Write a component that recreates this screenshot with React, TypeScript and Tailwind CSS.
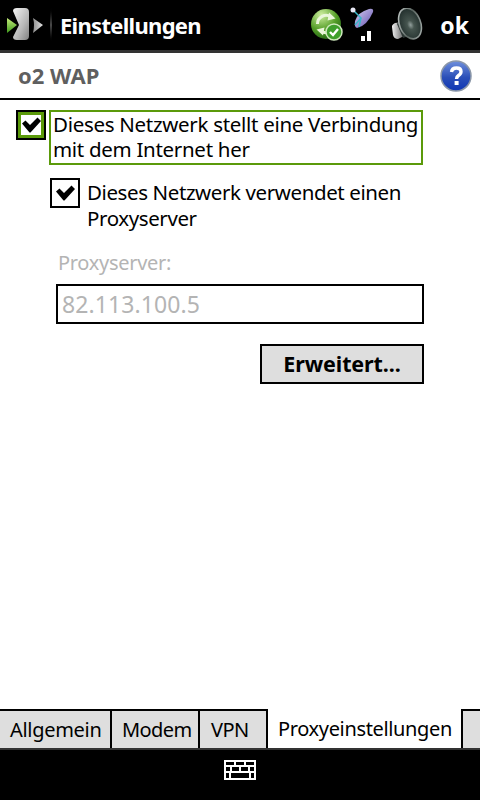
import React from 'react';

const Check = () => (
  <svg width="19" height="16" viewBox="0 0 19 16">
    <path d="M0 6.5 L3.5 3.5 L8 8 L15.5 0.5 L19 4 L8.5 15.5 L7.5 15.5 Z" fill="#000" />
  </svg>
);

const StartLogo = () => (
  <svg width="38" height="34" viewBox="0 0 38 34">
    <defs>
      <linearGradient id="tile" x1="0" y1="0" x2="1" y2="1">
        <stop offset="0" stopColor="#f4f4f4" />
        <stop offset="0.6" stopColor="#b8b8b8" />
        <stop offset="1" stopColor="#808080" />
      </linearGradient>
      <linearGradient id="arrow" x1="0" y1="0" x2="0" y2="1">
        <stop offset="0" stopColor="#c4ea7a" />
        <stop offset="1" stopColor="#3f9a1c" />
      </linearGradient>
      <linearGradient id="arrowGray" x1="0" y1="0" x2="1" y2="0">
        <stop offset="0" stopColor="#8f8f8f" />
        <stop offset="1" stopColor="#e4e4e4" />
      </linearGradient>
    </defs>
    <path d="M6 3 Q6 0 10 0 L18 0 Q22 0 22 4 L22 28 Q22 32 18 32 L10 32 Q6 32 6 29 L12 17 Z" fill="url(#tile)" />
    <path d="M0 10 L10 17 L0 25 Z" fill="url(#arrow)" />
    <path d="M26 10 L36 17 L26 25 Q28 17 26 10 Z" fill="url(#arrowGray)" />
  </svg>
);

const SyncIcon = () => (
  <svg width="32" height="32" viewBox="0 0 32 32">
    <defs>
      <radialGradient id="syncBg" cx="0.35" cy="0.2" r="0.9">
        <stop offset="0" stopColor="#cfeea0" />
        <stop offset="0.55" stopColor="#559f28" />
        <stop offset="1" stopColor="#1d5e10" />
      </radialGradient>
    </defs>
    <circle cx="15" cy="15" r="15" fill="url(#syncBg)" />
    <path d="M6.5 15 A8.5 8.5 0 0 1 20 8" fill="none" stroke="#eaf6da" strokeWidth="3" />
    <path d="M18 3.5 L24.5 9.5 L16.5 11.5 Z" fill="#eaf6da" />
    <path d="M23.5 15 A8.5 8.5 0 0 1 10 22" fill="none" stroke="#eaf6da" strokeWidth="3" />
    <path d="M12 26.5 L5.5 20.5 L13.5 18.5 Z" fill="#eaf6da" />
    <circle cx="23" cy="23" r="8" fill="#3f9f2c" stroke="#cfe9bd" strokeWidth="1.5" />
    <path d="M19 23 L22 26 L27 20" fill="none" stroke="#fff" strokeWidth="2.4" />
  </svg>
);

const SignalIcon = () => (
  <svg width="24" height="36" viewBox="0 0 24 36">
    <defs>
      <linearGradient id="dish" x1="0" y1="0" x2="1" y2="1">
        <stop offset="0" stopColor="#d8d0f2" />
        <stop offset="1" stopColor="#5f4fae" />
      </linearGradient>
    </defs>
    <path d="M7 21 Q17 19 23 5 Q24 1 19 2 Q8 5 5 14 Q4 20 7 21 Z" fill="url(#dish)" />
    <path d="M3 3 L11 11 L5 18 M11 11 L9 20" fill="none" stroke="#3cb7c9" strokeWidth="1.5" />
    <circle cx="3" cy="3" r="2.5" fill="#e8e8f4" />
    <rect x="11" y="29" width="4" height="5" fill="#fff" />
    <rect x="17" y="24" width="4" height="10" fill="#fff" />
  </svg>
);

const SpeakerIcon = () => (
  <svg width="32" height="34" viewBox="0 0 32 34">
    <defs>
      <linearGradient id="rim" x1="0" y1="0" x2="1" y2="1">
        <stop offset="0" stopColor="#d4dad9" />
        <stop offset="0.5" stopColor="#59645f" />
        <stop offset="1" stopColor="#b4bcba" />
      </linearGradient>
      <radialGradient id="cone" cx="0.5" cy="0.55" r="0.6">
        <stop offset="0" stopColor="#93a09d" />
        <stop offset="0.25" stopColor="#46554f" />
        <stop offset="1" stopColor="#1d2a28" />
      </radialGradient>
      <linearGradient id="magnet" x1="0" y1="0" x2="1" y2="0">
        <stop offset="0" stopColor="#f0f0f0" />
        <stop offset="0.6" stopColor="#8c8c8c" />
        <stop offset="1" stopColor="#4a4a4a" />
      </linearGradient>
    </defs>
    <path d="M1 19 Q0.5 17 4 15 L12 14 L15 27 L7 31 Q3 31 2 27 Z" fill="url(#magnet)" />
    <path d="M6 16 L14 2 L24 26 L12 30 Z" fill="#2c3735" />
    <ellipse cx="19" cy="15.5" rx="10.5" ry="16" transform="rotate(-22 19 15.5)" fill="url(#cone)" stroke="url(#rim)" strokeWidth="1.6" />
  </svg>
);

const HelpIcon = () => (
  <svg width="32" height="32" viewBox="0 0 32 32">
    <defs>
      <linearGradient id="helpBg" x1="0" y1="0" x2="0" y2="1">
        <stop offset="0" stopColor="#6f8fdc" />
        <stop offset="0.55" stopColor="#2a4fb8" />
        <stop offset="1" stopColor="#0f36b4" />
      </linearGradient>
    </defs>
    <circle cx="16" cy="16" r="15" fill="url(#helpBg)" stroke="#8b97a8" strokeWidth="1.5" />
    <path d="M11.5 12 Q12 8 16.5 8 Q21 8 21 11.5 Q21 14 18.5 15.5 Q16.5 16.8 16.5 19" fill="none" stroke="#fff" strokeWidth="3.4" />
    <rect x="14.6" y="21" width="4" height="4" fill="#fff" />
  </svg>
);

const KeyboardIcon = () => (
  <svg width="32" height="20" viewBox="0 0 32 20" shapeRendering="crispEdges">
    <rect x="0" y="0" width="32" height="20" fill="#fff" />
    <g fill="#000">
      <rect x="2" y="2" width="8" height="3" />
      <rect x="12" y="2" width="8" height="3" />
      <rect x="22" y="2" width="8" height="3" />
      <rect x="2" y="7" width="4" height="4" />
      <rect x="8" y="7" width="7" height="4" />
      <rect x="17" y="7" width="7" height="4" />
      <rect x="26" y="7" width="4" height="4" />
      <rect x="2" y="13" width="3" height="5" />
      <rect x="7" y="13" width="18" height="5" />
      <rect x="27" y="13" width="3" height="5" />
    </g>
  </svg>
);

const Checkbox = ({ focused }: { focused?: boolean }) => (
  <div className={`flex h-[30px] w-[30px] shrink-0 items-center justify-center border-2 border-black ${focused ? 'outline-[3px] -outline-offset-[5px] outline-[#5b9a0a]' : ''}`}>
    <Check />
  </div>
);

const Tab = ({ label, className }: { label: string; className: string }) => (
  <div className={`flex items-center border-t-2 border-r-2 border-black bg-[#dedede] ${className}`}>
    {label}
  </div>
);

export default function App() {
  return (
    <div className="flex h-[800px] w-[480px] flex-col overflow-hidden bg-white font-['Noto_Sans','Liberation_Sans',sans-serif] text-black">
      <header className="flex h-[53px] shrink-0 items-center border-b-[3px] border-[#333] bg-black text-white">
        <div className="ml-[7px] w-[38px]"><StartLogo /></div>
        <div className="ml-[5px] h-[36px] w-[2px] bg-gradient-to-b from-black via-[#4a4a4a] to-black" />
        <div className="ml-2 text-[22px] font-bold tracking-[-0.7px]">Einstellungen</div>
        <div className="ml-auto flex items-center">
          <SyncIcon />
          <div className="ml-[7px]"><SignalIcon /></div>
          <div className="ml-[17px]"><SpeakerIcon /></div>
          <div className="ml-[17px] mr-[11px] text-[23px] font-bold">ok</div>
        </div>
      </header>

      <div className="flex h-[47px] shrink-0 items-center justify-between border-b-2 border-black pl-[18px] pr-2">
        <div className="text-[22px] font-bold text-[#5f5f5f]">o2 WAP</div>
        <HelpIcon />
      </div>

      <main className="flex-1 pr-[56px] pl-4 pt-[10px]">
        <div className="mr-px flex gap-[3px]">
          <Checkbox focused />
          <div className="flex h-[55px] flex-1 items-center border-2 border-[#5b9a0a] pb-px pl-[2px] text-[20.5px] leading-[25px] tracking-[-0.3px]">
            <div className="whitespace-nowrap">Dieses Netzwerk stellt eine Verbindung<br />mit dem Internet her</div>
          </div>
        </div>

        <div className="ml-[34px] mt-[13px] flex gap-[7px]">
          <Checkbox />
          <div className="pt-px text-[20.5px] leading-[26px] tracking-[-0.4px]">Dieses Netzwerk verwendet einen<br />Proxyserver</div>
        </div>

        <div className="ml-[42px] mt-[19px] text-[20px] leading-[26px] tracking-[-0.3px] text-[#b4b4b4]">Proxyserver:</div>
        <div className="ml-[40px] mt-[8px] flex h-10 items-center border-2 border-black pl-1 text-[23px] tracking-[0.1px] text-[#b4b4b4]">82.113.100.5</div>
        <div className="mt-5 flex justify-end">
          <div className="flex h-10 w-[164px] items-center justify-center border-2 border-black bg-[#dedede] text-[21.5px] font-bold tracking-[-0.1px]">Erweitert...</div>
        </div>
      </main>

      <nav className="flex h-[39px] shrink-0 text-[20px] tracking-[-0.3px]">
        <Tab label="Allgemein" className="w-[112px] pl-[10px]" />
        <Tab label="Modem" className="w-[88px] pl-[10px] tracking-[-0.6px]" />
        <Tab label="VPN" className="w-[68px] pl-[11px] tracking-[-0.6px]" />
        <div className="flex w-[193px] items-center pl-[10px] tracking-[-0.35px]">Proxyeinstellungen</div>
        <div className="flex-1 border-l-2 border-t-2 border-black bg-[#dedede]" />
      </nav>

      <footer className="flex h-[52px] shrink-0 justify-center border-t-2 border-[#333] bg-black pt-[10px]">
        <KeyboardIcon />
      </footer>
    </div>
  );
}
